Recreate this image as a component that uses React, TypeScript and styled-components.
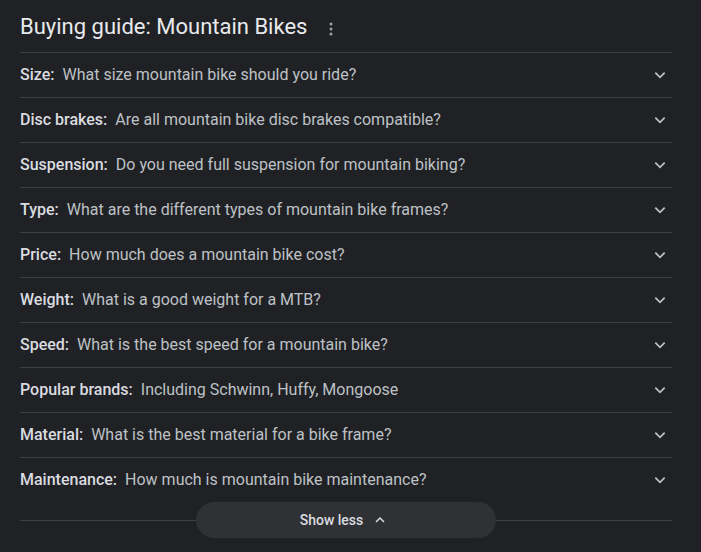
import styled, { createGlobalStyle } from 'styled-components';

const GlobalStyle = createGlobalStyle`
    body {
        margin: 0;
        background: #202124;
        font-family: Roboto, Arial, sans-serif;
    }
`;

const Container = styled.div`
    width: 652px;
    padding: 0 20px;
    min-height: 552px;
    background: #202124;
`;

const Header = styled.div`
    display: flex;
    align-items: center;
    height: 53px;
    border-bottom: 1px solid #3c4043;
    box-sizing: border-box;
`;

const Title = styled.h2`
    margin: 0;
    font-size: 22px;
    font-weight: 400;
    color: #e8eaed;
`;

const MoreButton = styled.span`
    display: flex;
    margin-left: 22px;
    margin-top: 6px;
`;

const Row = styled.div<{ last?: boolean }>`
    display: flex;
    align-items: center;
    height: ${(p) => (p.last ? '44px' : '45px')};
    padding-bottom: 1px;
    box-sizing: border-box;
    border-bottom: ${(p) => (p.last ? 'none' : '1px solid #3c4043')};
    font-size: 16px;
`;

const Label = styled.span`
    color: #dadce0;
    font-weight: 500;
    margin-right: 8px;
`;

const Question = styled.span`
    flex: 1;
    color: #bdc1c6;
`;

const Chevron = styled.span`
    display: flex;
    margin-right: 5px;
`;

const Footer = styled.div`
    position: relative;
    display: flex;
    justify-content: center;
    height: 36px;

    &::before {
        content: '';
        position: absolute;
        left: 0;
        right: 0;
        top: 18px;
        border-top: 1px solid #3c4043;
    }
`;

const ShowLess = styled.button`
    position: relative;
    display: flex;
    align-items: center;
    justify-content: center;
    gap: 11px;
    width: 300px;
    height: 36px;
    padding: 0 6px 0 0;
    border: none;
    border-radius: 18px;
    background: #303134;
    color: #dadce0;
    font-family: Roboto, Arial, sans-serif;
    font-size: 14px;
    font-weight: 500;
`;

const items = [
    ['Size', 'What size mountain bike should you ride?'],
    ['Disc brakes', 'Are all mountain bike disc brakes compatible?'],
    ['Suspension', 'Do you need full suspension for mountain biking?'],
    ['Type', 'What are the different types of mountain bike frames?'],
    ['Price', 'How much does a mountain bike cost?'],
    ['Weight', 'What is a good weight for a MTB?'],
    ['Speed', 'What is the best speed for a mountain bike?'],
    ['Popular brands', 'Including Schwinn, Huffy, Mongoose'],
    ['Material', 'What is the best material for a bike frame?'],
    ['Maintenance', 'How much is mountain bike maintenance?'],
];

function ChevronDown() {
    return (
        <svg width="14" height="14" viewBox="0 0 24 24">
            <path d="M4 8l8 8 8-8" fill="none" stroke="#bdc1c6" strokeWidth="3" />
        </svg>
    );
}

export default function App() {
    return (
        <>
            <GlobalStyle />
            <Container>
                <Header>
                    <Title>Buying guide: Mountain Bikes</Title>
                    <MoreButton>
                        <svg width="4" height="14" viewBox="0 0 4 14">
                            <circle cx="2" cy="2" r="1.5" fill="#9aa0a6" />
                            <circle cx="2" cy="7" r="1.5" fill="#9aa0a6" />
                            <circle cx="2" cy="12" r="1.5" fill="#9aa0a6" />
                        </svg>
                    </MoreButton>
                </Header>
                {items.map(([label, q], i) => (
                    <Row key={label} last={i === items.length - 1}>
                        <Label>{label}:</Label>
                        <Question>{q}</Question>
                        <Chevron>
                            <ChevronDown />
                        </Chevron>
                    </Row>
                ))}
                <Footer>
                    <ShowLess>
                        Show less
                        <svg width="12" height="12" viewBox="0 0 24 24">
                            <path d="M4 16l8-8 8 8" fill="none" stroke="#dadce0" strokeWidth="3" />
                        </svg>
                    </ShowLess>
                </Footer>
            </Container>
        </>
    );
}
